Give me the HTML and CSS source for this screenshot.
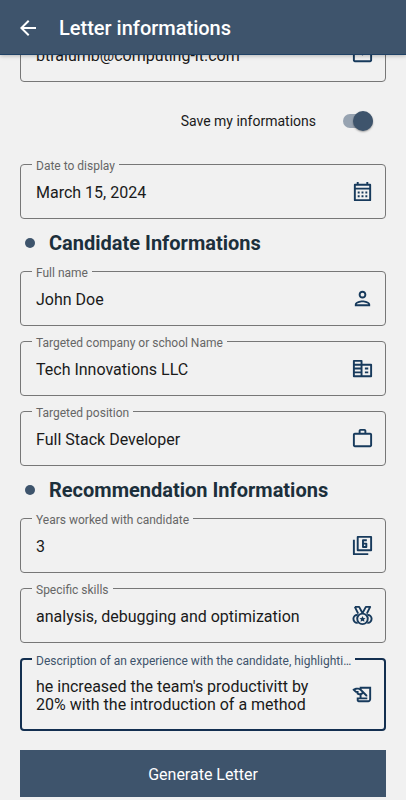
FILE: index.html
```html
<!DOCTYPE html>
<html lang="en">
<head>
<meta charset="utf-8">
<meta name="viewport" content="width=device-width, initial-scale=1">
<title>Letter informations</title>
<link rel="stylesheet" href="styles.css">
</head>
<body>
<header class="app-bar">
  <button class="back" type="button" aria-label="Back">
    <svg class="back-icon" viewBox="0 0 24 24"><path d="M20 11H7.830l5.590-5.590L12 4l-8 8 8 8 1.410-1.410L7.830 13H20v-2z"/></svg>
  </button>
  <h1 class="title">Letter informations</h1>
</header>
<main>
<form class="form">
  <div class="field">
    <input class="value" id="email" type="email" aria-label="Email" value="btralumb@computing-it.com">
    <svg class="icon" viewBox="0 0 24 24"><path d="M22 6c0-1.100-.9-2-2-2H4c-1.100 0-2 .9-2 2v12c0 1.100.9 2 2 2h16c1.100 0 2-.9 2-2V6zm-2 0l-8 5-8-5h16zm0 12H4V8l8 5 8-5v10z"/></svg>
  </div>

  <div class="save-row">
    <label for="save">Save my informations</label>
    <input class="switch" id="save" type="checkbox" role="switch" checked>
  </div>

  <div class="field">
    <label class="caption" for="date">Date to display</label>
    <input class="value" id="date" type="text" value="March 15, 2024">
    <svg class="icon line" viewBox="0 0 24 24"><path d="M4 5h16v16H4zM4 9h16M7 2v3M17 2v3"/><path class="solid" d="M7 12h2v2H7zm4 0h2v2h-2zm4 0h2v2h-2zm-8 4h2v2H7zm4 0h2v2h-2zm4 0h2v2h-2z"/></svg>
  </div>

  <h2 class="section">Candidate Informations</h2>

  <div class="group">
    <div class="field">
      <label class="caption" for="name">Full name</label>
      <input class="value" id="name" type="text" value="John Doe">
      <svg class="icon" viewBox="0 0 24 24"><path d="M12 6a2 2 0 1 1 0 4 2 2 0 0 1 0-4m0 10c2.700 0 5.800 1.290 6 2H6c.23-.72 3.310-2 6-2m0-12C9.790 4 8 5.790 8 8s1.790 4 4 4 4-1.790 4-4-1.790-4-4-4zm0 10c-2.670 0-8 1.340-8 4v2h16v-2c0-2.660-5.330-4-8-4z"/></svg>
    </div>
    <div class="field">
      <label class="caption" for="company">Targeted company or school Name</label>
      <input class="value" id="company" type="text" value="Tech Innovations LLC">
      <svg class="icon line" viewBox="0 0 24 24"><path d="M3 4h8v16H3zM3 8h8M3 12h8M3 16h8M11 8h10v12H11M14.500 12h3.500M14.500 16h3.500"/></svg>
    </div>
    <div class="field">
      <label class="caption" for="position">Targeted position</label>
      <input class="value" id="position" type="text" value="Full Stack Developer">
      <svg class="icon" viewBox="0 0 24 24"><path d="M14 6V4h-4v2h4zM4 8v11h16V8H4zm16-2c1.110 0 2 .89 2 2v11c0 1.110-.89 2-2 2H4c-1.110 0-2-.89-2-2V8c0-1.110.89-2 2-2h4V4c0-1.110.89-2 2-2h4c1.110 0 2 .89 2 2v2h4z"/></svg>
    </div>
  </div>

  <h2 class="section">Recommendation Informations</h2>

  <div class="group">
    <div class="field">
      <label class="caption" for="years">Years worked with candidate</label>
      <input class="value" id="years" type="text" inputmode="numeric" value="3">
      <svg class="icon line" viewBox="0 0 24 24"><path d="M7 3h14v14H7zM3 6v15h15M16.500 6.500h-4v7h3.500v-3.500h-3.500"/></svg>
    </div>
    <div class="field">
      <label class="caption" for="skills">Specific skills</label>
      <input class="value" id="skills" type="text" value="analysis, debugging and optimization">
      <svg class="icon line" viewBox="0 0 24 24"><circle cx="12" cy="15.500" r="5.500"/><path d="M7 11.500c-2.500-.5-4.500 1.500-4.500 4s2 4.500 4.500 4M17 11.500c2.500-.5 4.500 1.500 4.500 4s-2 4.500-4.500 4M4 3h4.500l3.500 6.500L15.500 3H20l-3.500 7M4 3l3.500 7"/><path class="solid" d="m12 12.500 1 2 2.200.3-1.600 1.500.4 2.200-2-1-2 1 .4-2.200-1.600-1.500 2.200-.3z"/></svg>
    </div>
    <div class="field active">
      <label class="caption" for="experience">Description of an experience with the candidate, highlighti…</label>
      <textarea class="value" id="experience" rows="2">he increased the team's productivitt by 20% with the introduction of a method</textarea>
      <svg class="icon" viewBox="0 0 24 24"><path d="M9 4v1.380c-.83-.33-1.720-.5-2.610-.5-1.790 0-3.580.68-4.950 2.050l3.330 3.330h1.110v1.110c.86.86 1.980 1.310 3.110 1.360V15H6v3c0 1.100.9 2 2 2h10c1.660 0 3-1.340 3-3V4H9zm-1.110 6.410V8.260H5.610L4.570 7.220a5.070 5.070 0 0 1 1.820-.34c1.340 0 2.590.52 3.540 1.460l1.410 1.410-.2.2a2.700 2.700 0 0 1-1.920.8c-.47 0-.93-.12-1.330-.34zM19 17c0 .55-.45 1-1 1H8v-1h9v-2h-6v-2.590c.57-.23 1.100-.57 1.560-1.030l.2-.2L15.590 14H17v-1.410l-6-5.970V6h8v11z"/></svg>
    </div>
  </div>

  <button class="submit" type="button">Generate Letter</button>
</form>
</main>
</body>
</html>
```

FILE: styles.css
```css
* {
  box-sizing: border-box;
}

body {
  margin: 0;
  background: #f1f1f1;
  color: #1a1a1a;
  font-family: Roboto, "Liberation Sans", sans-serif;
  font-size: 15px;
}

.app-bar {
  position: sticky;
  top: 0;
  z-index: 2;
  display: flex;
  align-items: center;
  gap: 19px;
  height: 55px;
  padding: 2px 16px 0;
  background: #3e546c;
  color: #fff;
  border-bottom: 1px solid #1f4165;
  box-shadow: 0 1px 4px rgba(0, 0, 0, 0.25);
}

.back {
  display: flex;
  padding: 0;
  border: 0;
  background: none;
}

.back-icon {
  width: 24px;
  height: 24px;
  fill: #fff;
}

.title {
  margin: 0;
  font-size: 20px;
  font-weight: 500;
}

.form {
  display: flex;
  flex-direction: column;
  margin-top: -28px;
  padding: 0 20px 3px;
}

.group {
  display: flex;
  flex-direction: column;
  gap: 15px;
}

.field {
  position: relative;
  display: flex;
  align-items: center;
  gap: 12px;
  min-height: 55px;
  padding: 0 11px 0 15px;
  border: 1px solid #777;
  border-radius: 4px;
}

.caption {
  position: absolute;
  top: -7px;
  left: 11px;
  max-width: calc(100% - 26px);
  padding: 0 4px;
  overflow: hidden;
  background: #f1f1f1;
  color: #666;
  font-size: 12px;
  line-height: 16px;
  text-overflow: ellipsis;
  white-space: nowrap;
}

.value {
  flex: 1;
  min-width: 0;
  padding: 2px 0 0;
  border: 0;
  outline: 0;
  background: none;
  color: #1a1a1a;
  font-family: inherit;
  font-size: 16px;
  line-height: 18px;
  resize: none;
}

.icon {
  flex: none;
  width: 23px;
  height: 23px;
  fill: #173a5c;
}

.line {
  fill: none;
  stroke: #173a5c;
  stroke-width: 2;
  stroke-linejoin: round;
}

.solid {
  fill: #173a5c;
  stroke: none;
}

.active {
  min-height: 73px;
  padding: 0 10px 0 14px;
  border: 2px solid #132f50;
}

.active .caption {
  left: 10px;
  color: #3e546c;
}

.save-row {
  display: flex;
  justify-content: flex-end;
  align-items: center;
  gap: 27px;
  height: 82px;
  padding: 0 13px 4px;
  font-size: 14px;
}

.switch {
  display: flex;
  align-items: center;
  justify-content: flex-end;
  width: 30px;
  height: 14px;
  margin: 0;
  border-radius: 7px;
  background: #97a3b1;
  appearance: none;
}

.switch::before {
  content: "";
  flex: none;
  width: 20px;
  height: 20px;
  border-radius: 50%;
  background: #3e546c;
  box-shadow: 0 1px 2px rgba(0, 0, 0, 0.35);
}

.section {
  display: flex;
  align-items: center;
  gap: 14px;
  height: 52px;
  margin: 0;
  padding: 0 5px 4px;
  color: #1c2f3b;
  font-size: 20px;
  font-weight: 700;
}

.section::before {
  content: "";
  width: 10px;
  height: 10px;
  border-radius: 50%;
  background: #3e546c;
}

.submit {
  height: 47px;
  margin-top: 19px;
  padding: 2px 0 0;
  border: 0;
  background: #3e546c;
  color: #fff;
  font-family: inherit;
  font-size: 16px;
}
```
